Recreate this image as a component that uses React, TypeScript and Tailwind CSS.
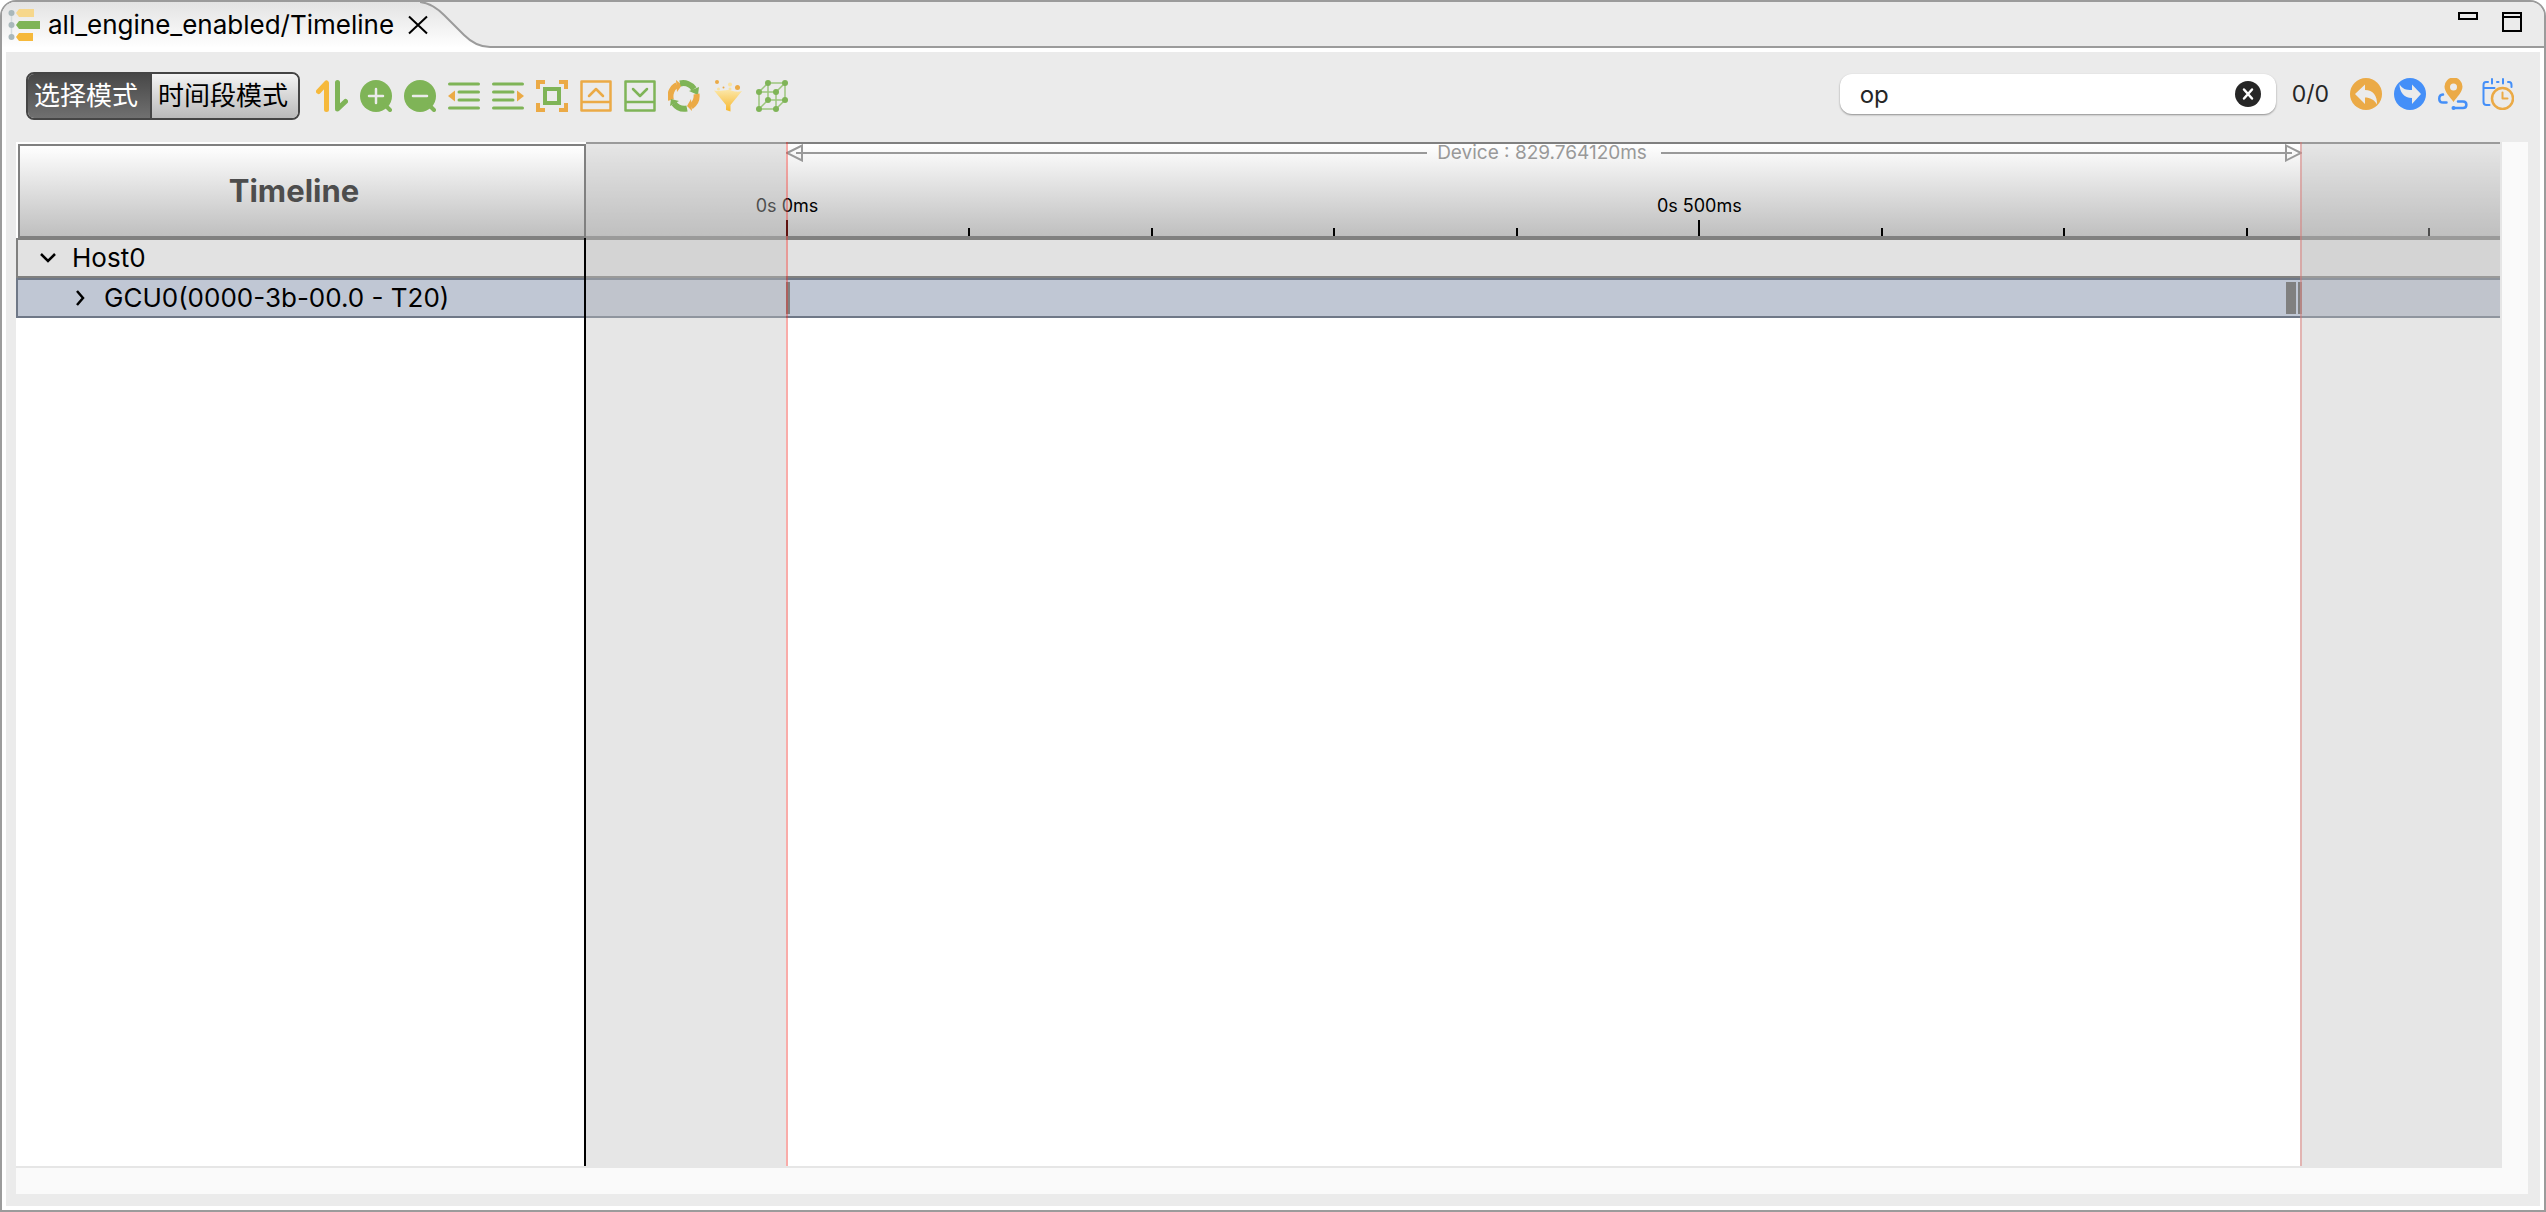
import clsx from "clsx";
import type { ReactNode } from "react";

const DEVICE_MS = 829.76412;
const GREEN = "#7fb457";
const ORANGE = "#ebaa46";
const BLUE = "#448ff8";

const TICKS = [0, 100, 200, 300, 400, 500, 600, 700, 800, 900];

const BARS = [
  { start: 0, length: 2.2 },
  { start: 821, length: 5.5 },
  { start: 827.6, length: 2.16 },
];

const percent = (ms: number) => `${(ms / DEVICE_MS) * 100}%`;

interface ToolButtonProps {
  label: string;
  children: ReactNode;
}

function ToolButton({ label, children }: ToolButtonProps) {
  return (
    <button type="button" aria-label={label} className="size-8 shrink-0">
      <svg viewBox="0 0 32 32" className="size-8" fill="none" strokeLinecap="round" strokeLinejoin="round">
        {children}
      </svg>
    </button>
  );
}

function TimelineIcon() {
  return (
    <svg viewBox="0 0 32 32" className="size-8 shrink-0" aria-hidden="true">
      <path d="M3.5 4V28" stroke="#d3dcde" strokeWidth="1.5" />
      <circle cx="3.5" cy="4" r="3" fill="#a9b8bb" />
      <circle cx="3.5" cy="16" r="3" fill="#a9b8bb" />
      <circle cx="3.5" cy="28" r="3" fill="#a9b8bb" />
      <path d="M8 4l3-4h15v8H11z" fill="#f6d78c" />
      <path d="M8 16l3-4h21v8H11z" fill={GREEN} />
      <path d="M8 28l3-4h14v8H11z" fill="#f6b93b" />
    </svg>
  );
}

function TabStrip() {
  return (
    <div className="flex h-[46px] bg-[#ebebeb]">
      <div className="relative flex items-center pr-[62px] pl-1.5">
        <div className="absolute inset-y-0 right-[70px] left-0 bg-linear-to-b from-[#e3e3e3] to-white" />
        <svg viewBox="0 0 70 46" className="absolute top-0 right-0 h-[46px] w-[70px]" aria-hidden="true">
          <defs>
            <linearGradient id="tab-fill" gradientUnits="userSpaceOnUse" x1="0" y1="0" x2="0" y2="46">
              <stop offset="0" stopColor="#e3e3e3" />
              <stop offset="1" stopColor="#fff" />
            </linearGradient>
          </defs>
          <path d="M0 0C10 1 17 6 24 13L44 33C52 41 60 45 70 45V46H0z" fill="url(#tab-fill)" />
          <path d="M0 0C10 1 17 6 24 13L44 33C52 41 60 45 70 45" fill="none" stroke="#9b9b9b" strokeWidth="2" />
        </svg>
        <div className="relative flex items-center">
          <TimelineIcon />
          <span className="ml-2 text-[26px] leading-8 text-black">all_engine_enabled/Timeline</span>
          <button type="button" aria-label="Close tab" className="ml-3.5">
            <svg viewBox="0 0 20 20" className="size-5" stroke="#000" strokeWidth="2" aria-hidden="true">
              <path d="M1 1.5L19 18.5M19 1.5L1 18.5" />
            </svg>
          </button>
        </div>
      </div>
      <div className="flex flex-1 items-start justify-end gap-6 border-b-2 border-[#9b9b9b] pt-2.5 pr-[22px]">
        <button type="button" aria-label="Minimize" className="h-2 w-5 border-2 border-black" />
        <button type="button" aria-label="Maximize" className="flex size-5 items-start border-2 border-black">
          <span className="h-1 w-full border-b-2 border-black" />
        </button>
      </div>
    </div>
  );
}

function ModeSwitch() {
  return (
    <div className="mr-4 flex h-12 overflow-hidden rounded-lg border-2 border-[#454545] text-[26px] leading-8">
      <button
        type="button"
        aria-pressed="true"
        className="border-r-2 border-[#454545] bg-linear-to-b from-[#484848] to-[#707070] pr-3 pl-1.5 text-white"
      >
        选择模式
      </button>
      <button
        type="button"
        aria-pressed="false"
        className="bg-linear-to-b from-[#f4f4f4] to-[#bababa] pr-2.5 pl-1.5 text-black"
      >
        时间段模式
      </button>
    </div>
  );
}

function ViewTools() {
  return (
    <div className="flex gap-3">
      <ToolButton label="Sort">
        <path d="M2.5 11.5L10.5 3V29.5" stroke="#f6b93b" strokeWidth="5" />
        <path d="M21.5 2.5V29L29.5 21.5" stroke={GREEN} strokeWidth="5" />
      </ToolButton>
      <ToolButton label="Zoom in">
        <circle cx="16" cy="16" r="16" fill={GREEN} />
        <path d="M25 25l5 5" stroke={GREEN} strokeWidth="4" />
        <path d="M16 9v14M9 16h14" stroke="#ebebeb" strokeWidth="2.5" />
      </ToolButton>
      <ToolButton label="Zoom out">
        <circle cx="16" cy="16" r="16" fill={GREEN} />
        <path d="M25 25l5 5" stroke={GREEN} strokeWidth="4" />
        <path d="M9 16h14" stroke="#ebebeb" strokeWidth="2.5" />
      </ToolButton>
      <ToolButton label="Collapse rows">
        <path d="M1.5 4h29M11 12h19.5M11 20h19.5M1.5 28h29" stroke={GREEN} strokeWidth="3" />
        <path d="M0 16l7-5.5v11z" fill={ORANGE} />
      </ToolButton>
      <ToolButton label="Expand rows">
        <path d="M1.5 4h29M1.5 12H21M1.5 20H21M1.5 28h29" stroke={GREEN} strokeWidth="3" />
        <path d="M32 16l-7-5.5v11z" fill={ORANGE} />
      </ToolButton>
      <ToolButton label="Fit to window">
        <path
          d="M2 9V2h7M23 2h7v7M30 23v7h-7M9 30H2v-7"
          stroke={ORANGE}
          strokeWidth="4"
          strokeLinecap="butt"
          strokeLinejoin="miter"
        />
        <rect x="9" y="9" width="14" height="14" stroke={GREEN} strokeWidth="4" strokeLinejoin="miter" />
      </ToolButton>
      <ToolButton label="Collapse panel">
        <path d="M1.5 1.5h29v29h-29zM1.5 22h29" stroke={ORANGE} strokeWidth="2.5" />
        <path d="M9 16l7-7 7 7" stroke={ORANGE} strokeWidth="2.5" />
      </ToolButton>
      <ToolButton label="Expand panel">
        <path d="M1.5 1.5h29v29h-29zM1.5 22h29" stroke={GREEN} strokeWidth="2.5" />
        <path d="M9 9l7 7 7-7" stroke={GREEN} strokeWidth="2.5" />
      </ToolButton>
      <ToolButton label="Refresh">
        <path d="M3 20A13 13 0 0 1 9 5" stroke={ORANGE} strokeWidth="6" strokeLinecap="butt" />
        <path d="M8 0l6 5-5 7z" fill={ORANGE} />
        <path d="M12 3.5A13 13 0 0 1 26 9" stroke={GREEN} strokeWidth="6" strokeLinecap="butt" />
        <path d="M31 7l-1 8-9-4z" fill={GREEN} />
        <path d="M28.5 14A13 13 0 0 1 23 26.5" stroke={ORANGE} strokeWidth="6" strokeLinecap="butt" />
        <path d="M24 31l-5-5 4-7z" fill={ORANGE} />
        <path d="M19 28.5A13 13 0 0 1 6 23.5" stroke={GREEN} strokeWidth="6" strokeLinecap="butt" />
        <path d="M2 26l1-7 8 2z" fill={GREEN} />
      </ToolButton>
      <ToolButton label="Filter">
        <defs>
          <linearGradient id="funnel" x1="0" y1="0" x2="0" y2="1">
            <stop offset="0" stopColor="#fbe6a6" />
            <stop offset="1" stopColor="#f7b72d" />
          </linearGradient>
        </defs>
        <path d="M2 10.5C8 12 14 9 19 10.5S27 12 30 11L18.5 25v6.5L14 30V25z" fill="url(#funnel)" />
        <circle cx="5" cy="2" r="2" fill={ORANGE} />
        <circle cx="18" cy="4.5" r="2" fill="#fae3a0" />
        <circle cx="6.5" cy="9" r="1.5" fill="#fae3a0" />
        <circle cx="11.5" cy="7.5" r="1" fill={ORANGE} />
        <circle cx="18" cy="9" r="1.5" fill="#fae3a0" />
        <circle cx="25.5" cy="7.5" r="2.5" fill={ORANGE} />
      </ToolButton>
      <ToolButton label="3D view">
        <path
          d="M3 12h17v17H3zM12 3h17v17H12zM3 12l9-9M20 12l9-9M3 29l9-9M20 29l9-9"
          stroke="#9cc67c"
          strokeWidth="1.5"
        />
        <g fill={GREEN}>
          <circle cx="3" cy="12" r="3" />
          <circle cx="20" cy="12" r="3" />
          <circle cx="3" cy="29" r="3" />
          <circle cx="20" cy="29" r="3" />
          <circle cx="12" cy="3" r="3" />
          <circle cx="29" cy="3" r="3" />
          <circle cx="12" cy="20" r="3" />
          <circle cx="29" cy="20" r="3" />
        </g>
      </ToolButton>
    </div>
  );
}

function SearchTools() {
  return (
    <div className="mb-1 ml-auto flex items-center">
      <div className="relative">
        <input
          type="text"
          aria-label="Search"
          defaultValue="op"
          className="h-10 w-[436px] rounded-xl bg-white pr-12 pl-5 text-2xl text-[#262626] shadow-[0_1px_2px_rgba(0,0,0,0.4)] outline-none"
        />
        <button type="button" aria-label="Clear search" className="absolute top-[7px] right-[15px] size-[26px]">
          <svg viewBox="0 0 26 26" className="size-[26px]" aria-hidden="true">
            <circle cx="13" cy="13" r="13" fill="#262626" />
            <path d="M9 8.5l8 9M17 8.5l-8 9" stroke="#fff" strokeWidth="2.5" strokeLinecap="round" />
          </svg>
        </button>
      </div>
      <span className="mr-[21px] ml-4 text-[23px] leading-8 text-[#262626]">0/0</span>
      <div className="flex gap-3">
        <ToolButton label="Undo">
          <circle cx="16" cy="16" r="16" fill={ORANGE} />
          <path d="M5 16L15 6.5V12c8 0 12.5 6 12 14.5-3-5-7-7-12-7V26z" fill="#ebebeb" />
        </ToolButton>
        <ToolButton label="Redo">
          <circle cx="16" cy="16" r="16" fill={BLUE} />
          <path d="M27 16L18 6.5V12C12 12 8 11 5.5 6c0 8 4.5 14 12.5 14v6z" fill="#ebebeb" />
        </ToolButton>
        <ToolButton label="Go to marker">
          <path
            d="M5 16.5C0 17 0 24.5 5 24.5h3.5M20 23.5h5c4.5 0 4.5 6.5 0 6.5h-9.5"
            stroke={BLUE}
            strokeWidth="2.5"
          />
          <circle cx="15.5" cy="30" r="2" fill={BLUE} />
          <path d="M15.5 24C12 19 6.5 14 6.5 8.5a9 9 0 0 1 18 0C24.5 14 19 19 15.5 24z" fill={ORANGE} />
          <circle cx="15.5" cy="9" r="3.5" fill="#ebebeb" />
        </ToolButton>
        <ToolButton label="Time range">
          <path
            d="M6 4H4Q1.5 4 1.5 7v17q0 3 3 3h3M1.5 10h11M26 4h1q2.5 0 2.5 3v2M10 1v4.5M21 1v4.5M15 4h1.5"
            stroke={BLUE}
            strokeWidth="2"
          />
          <circle cx="20.5" cy="20.5" r="10.5" stroke={ORANGE} strokeWidth="2.5" fill="#ebebeb" />
          <path d="M20.5 14.5v6h5" stroke={ORANGE} strokeWidth="2" />
        </ToolButton>
      </div>
    </div>
  );
}

function TreePane() {
  return (
    <div className="flex w-[570px] shrink-0 flex-col bg-white">
      <div className="h-24 pt-0.5 pl-0.5">
        <div className="flex h-full items-center justify-center border-2 border-[#808080] bg-linear-to-b from-white to-[#bfbfbf] pr-4 text-[31px] font-bold text-[#4d4d4d]">
          Timeline
        </div>
      </div>
      <div className="flex flex-1 flex-col border-r-2 border-black text-[26px] leading-8 text-black">
        <button
          type="button"
          aria-expanded="true"
          className="flex h-10 items-center gap-4 border-2 border-r-0 border-[#80807f] bg-[#e2e2e2] pl-[22px]"
        >
          <svg viewBox="0 0 16 16" className="size-4" fill="none" stroke="#000" strokeWidth="2.5" aria-hidden="true">
            <path d="M1 4l7 7 7-7" />
          </svg>
          Host0
        </button>
        <button
          type="button"
          aria-expanded="false"
          className="flex h-10 items-center gap-4 border-2 border-r-0 border-[#6f7887] bg-[#c0c7d4] pl-[54px]"
        >
          <svg viewBox="0 0 16 16" className="size-4" fill="none" stroke="#000" strokeWidth="2.5" aria-hidden="true">
            <path d="M5 1l6 7-6 7" />
          </svg>
          GCU0(0000-3b-00.0 - T20)
        </button>
      </div>
    </div>
  );
}

function DeviceSpan() {
  return (
    <div className="-mr-0.5 flex h-[18px] items-center text-[19px] leading-[18px] text-[#999]">
      <svg viewBox="0 0 18 18" className="size-[18px]" fill="none" stroke="#999" strokeWidth="2" aria-hidden="true">
        <path d="M1 9L16 1.5v15zM10 9h8" />
      </svg>
      <span className="h-0.5 flex-1 bg-[#999]" />
      <span className="mr-3.5 ml-2.5">Device : 829.764120ms</span>
      <span className="h-0.5 flex-1 bg-[#999]" />
      <svg viewBox="0 0 18 18" className="size-[18px]" fill="none" stroke="#999" strokeWidth="2" aria-hidden="true">
        <path d="M17 9L2 1.5v15zM0 9h8" />
      </svg>
    </div>
  );
}

function Ruler() {
  return (
    <div className="h-24 border-y-2 border-[#808080] bg-linear-to-b from-white to-[#bfbfbf] px-[200px]">
      <div className="relative h-full">
        <DeviceSpan />
        {TICKS.map((ms) => (
          <div
            key={ms}
            className="absolute bottom-0 flex w-0.5 flex-col items-center"
            style={{ left: percent(ms) }}
          >
            {ms % 500 === 0 && (
              <span className="mb-0.5 text-lg leading-6 whitespace-nowrap text-black">0s {ms}ms</span>
            )}
            <span className={clsx("w-0.5 bg-black", ms % 500 === 0 ? "h-4" : "h-2")} />
          </div>
        ))}
      </div>
    </div>
  );
}

function Chart() {
  return (
    <div className="relative flex-1 bg-white">
      <div className="mr-0.5">
        <Ruler />
        <div className="h-10 border-y-2 border-[#80807f] bg-[#e2e2e2]" />
        <div className="h-10 border-y-2 border-[#6f7887] bg-[#c0c7d4] py-0.5 pr-[198px] pl-[200px]">
          <div className="relative h-full">
            {BARS.map((bar) => (
              <div
                key={bar.start}
                className="absolute inset-y-0 bg-[#808080]"
                style={{ left: percent(bar.start), width: percent(bar.length) }}
              />
            ))}
          </div>
        </div>
      </div>
      {/* areas outside the device's run */}
      <div className="absolute inset-y-0 left-0 w-[200px] bg-[#c0c0c0]/40" />
      <div className="absolute inset-y-0 left-[200px] w-0.5 bg-[#f03028]/40" />
      <div className="absolute inset-y-0 right-[200px] w-0.5 bg-[#f03028]/40" />
      <div className="absolute inset-y-0 right-0 w-[202px] bg-[#c0c0c0]/40" />
    </div>
  );
}

export default function App() {
  return (
    <div className="flex h-screen flex-col overflow-hidden rounded-t-2xl border-2 border-[#9b9b9b] bg-white font-['Inter','Noto_Sans_CJK_SC',sans-serif]">
      <TabStrip />
      <div className="m-1 flex flex-1 flex-col bg-[#ebebeb] pr-3 pb-3 pl-2.5">
        <div className="flex h-[90px] items-center pr-3.5 pb-0.5 pl-2.5">
          <ModeSwitch />
          <ViewTools />
          <SearchTools />
        </div>
        <div className="flex flex-1">
          <div className="flex flex-1 border-b-2 border-[#e6e6e6]">
            <TreePane />
            <Chart />
          </div>
          <div className="w-[26px] bg-[#fafafa]" />
        </div>
        <div className="h-[26px] bg-[#fafafa]" />
      </div>
    </div>
  );
}
